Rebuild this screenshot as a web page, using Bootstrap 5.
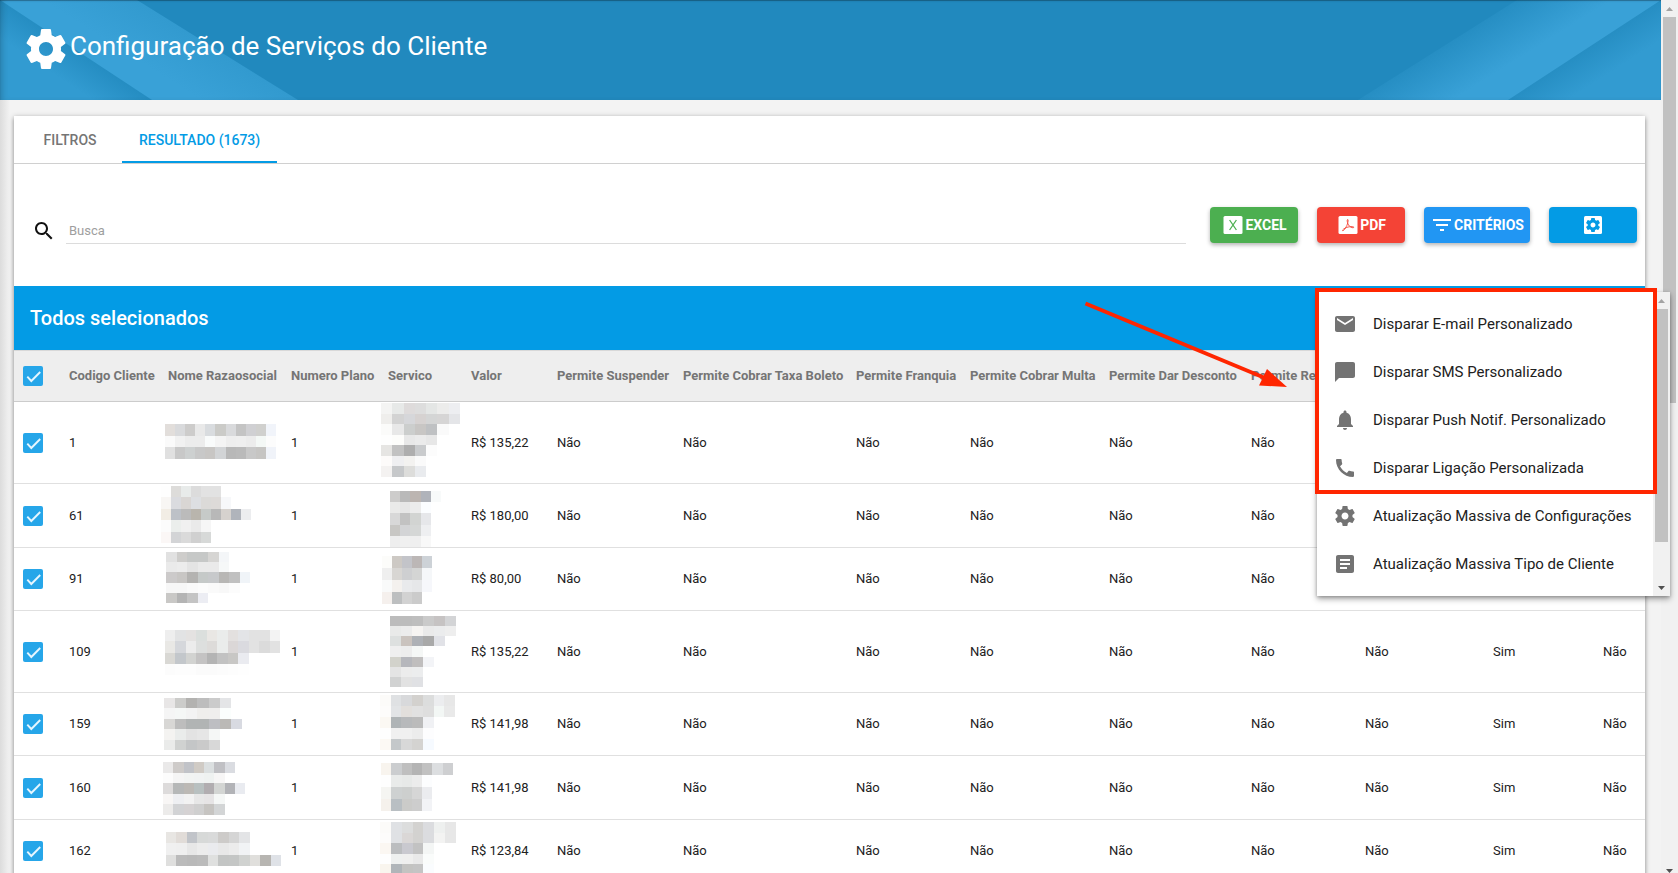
<!DOCTYPE html>
<html lang="pt-BR">
<head>
<meta charset="utf-8">
<meta name="viewport" content="width=device-width, initial-scale=1">
<title>Configuração de Serviços do Cliente</title>
<link rel="stylesheet" href="https://cdn.jsdelivr.net/npm/bootstrap@5.3.0/dist/css/bootstrap.min.css">
<style>
  body { font-family: Roboto, "Liberation Sans", sans-serif; font-size: 13px; color: #212121; background: #f3f3f3; }
  .app-shell { height: 100vh; }
  .app-main { min-width: 0; background: linear-gradient(90deg, #dcdcdc 0, #f3f3f3 10px); }

  .page-head { height: 100px; background: #2189be; padding-left: 22px; }
  .page-head .ribbon { top: 0; height: 100px; z-index: 0; }
  .page-head .ribbon-start { left: 0; width: 300px; }
  .page-head .ribbon-end { right: 0; width: 304px; }
  .page-head::after { content: ""; position: absolute; inset: 0; box-shadow: inset 0 1px 1px rgba(0,0,0,.3), inset 5px 0 6px -3px rgba(0,0,0,.2); }
  .page-title { font-size: 26px; line-height: 32px; font-weight: 400; color: #fff; z-index: 1; padding-bottom: 6px; }
  .head-stack { gap: 0; padding-bottom: 2px; }
  .head-icon { width: 48px; height: 48px; color: #fff; z-index: 1; }

  .panel-wrap { padding: 16px 16px 0 14px; }
  .panel { background: #fff; box-shadow: 0 1px 5px rgba(0,0,0,.3), 0 3px 4px rgba(0,0,0,.2); }
  .tab-strip { height: 48px; border-bottom: 1px solid #d0d0d0; padding-left: 4px; flex-wrap: nowrap; }
  .tab-strip .nav-link { height: 47px; min-width: 104px; padding: 0 17px; border: 0; border-bottom: 2px solid transparent; border-radius: 0; font-size: 14px; line-height: 48px; font-weight: 500; color: #757575; text-align: center; }
  .tab-strip .nav-link.active { color: #039be5; border-bottom-color: #039be5; background: none; }

  .tool-row { height: 122px; padding: 0 8px 0 14px; gap: 19px; }
  .search-box { gap: 7px; margin-right: 5px; padding-top: 12px; }
  .search-box svg { width: 24px; height: 24px; margin: 0 3px 0 4px; fill: #111; flex: none; }
  .search-input { border: 0; border-bottom: 1px solid #dcdcdc; border-radius: 0; height: 26px; padding: 0 3px 0 3px; font-size: 13px; background: none; }
  .search-input::placeholder { color: #9e9e9e; opacity: 1; }
  .tool-btn { height: 36px; min-width: 88px; padding: 0 6px; border: 0; border-radius: 4px; color: #fff; font-size: 14px; line-height: 36px; font-weight: 700; box-shadow: 0 2px 4px rgba(0,0,0,.3); }
  .tool-btn svg { width: 24px; height: 24px; flex: none; }
  .tool-btn:hover { color: #fff; }
  .btn-excel, .btn-excel:hover { background: #4caf50; }
  .btn-pdf, .btn-pdf:hover { background: #f44336; }
  .btn-crit, .btn-crit:hover { background: #2196f3; }
  .btn-gear, .btn-gear:hover { background: #039be5; }

  .select-bar { height: 64px; padding-left: 16px; background: #039be5; color: #fff; font-size: 20px; line-height: 24px; font-weight: 500; }

  .grid-table { table-layout: fixed; width: 100%; border-collapse: separate; border-spacing: 0; white-space: nowrap; line-height: 18px; }
  .grid-table th, .grid-table td { padding: 0 0 0 20px; vertical-align: middle; border-bottom: 1px solid #e0e0e0; }
  .grid-table th { height: 52px; background: #eee; color: #757575; font-weight: 700; font-size: 13px; border-top: 1px solid #d8d8d8; border-bottom-color: #ccc; }
  .grid-table td.mosaic-cell { padding: 0; }
  .grid-table th:first-child, .grid-table td:first-child { padding-left: 9px; }
  .grid-table tbody tr:nth-child(even) { height: 64px; }
  .grid-table tbody tr:nth-child(odd) { height: 63px; }
  .grid-table tbody tr.row-tall { height: 82px; }
  .mosaic { display: block; width: 100%; height: 62px; overflow: visible; }
  .row-tall .mosaic { height: 81px; }
  .col-check { width: 35px; } .col-code { width: 99px; } .col-name { width: 123px; } .col-plan { width: 97px; }
  .col-service { width: 83px; } .col-value { width: 86px; } .col-suspend { width: 126px; } .col-slip { width: 173px; }
  .col-quota { width: 114px; } .col-fine { width: 139px; } .col-discount { width: 142px; } .col-adjust { width: 114px; }
  .col-extra { width: 128px; } .col-extra-b { width: 110px; }

  .tick { display: block; width: 20px; height: 20px; margin: 0; border-radius: 2px; appearance: none;
    background: #26a6e9 url("data:image/svg+xml,%3Csvg xmlns='http://www.w3.org/2000/svg' viewBox='0 0 20 20'%3E%3Cpath d='M4.3 10.6l4 4.4 8.9-9' fill='none' stroke='%23e6f6ff' stroke-width='1.9'/%3E%3C/svg%3E") center / 20px 20px; }

  .action-menu { top: 85px; right: -33px; width: 353px; padding: 8px 17px 8px 0; background: #fff; z-index: 20; box-shadow: 0 3px 6px rgba(0,0,0,.35), 0 1px 3px rgba(0,0,0,.2); }
  .menu-entry { height: 48px; padding: 0 16px; gap: 16px; font-size: 15px; line-height: 24px; color: #212121; background: none; border: 0; white-space: nowrap; }
  .menu-entry svg { width: 24px; height: 24px; fill: #737373; flex: none; }
  .menu-mark { left: -2px; top: -4px; width: 342px; height: 206px; border: 4px solid #ff2600; pointer-events: none; z-index: 2; }
  .menu-arrow { left: -234px; top: 9px; width: 206px; height: 90px; pointer-events: none; }

  .bar-track { width: 17px; background: #f1f1f1; padding: 0 2px; }
  .bar-thumb { background: #c1c1c1; }
  .bar-cap { height: 17px; flex: none; display: flex; align-items: center; justify-content: center; }
  .bar-cap svg { width: 7px; height: 4px; }
  .menu-bar { top: 0; right: 0; bottom: 0; }
  .menu-bar .bar-thumb { height: 233px; }
  .page-bar .bar-thumb { height: 386px; }
  .page-bar .bar-end { height: 4px; align-items: flex-start; }
</style>
</head>
<body class="overflow-hidden">
<svg width="0" height="0" class="position-absolute" aria-hidden="true">
  <symbol id="gear" viewBox="0 0 24 24"><path d="M19.43 12.98c.04-.32.07-.64.07-.98s-.03-.66-.07-.98l2.11-1.65c.19-.15.24-.42.12-.64l-2-3.46c-.12-.22-.39-.3-.61-.22l-2.49 1c-.52-.4-1.08-.73-1.69-.98l-.38-2.65C14.46 2.18 14.25 2 14 2h-4c-.25 0-.46.18-.49.42l-.38 2.65c-.61.25-1.17.59-1.69.98l-2.49-1c-.23-.09-.49 0-.61.22l-2 3.46c-.13.22-.07.49.12.64l2.11 1.65c-.04.32-.07.65-.07.98s.03.66.07.98l-2.11 1.65c-.19.15-.24.42-.12.64l2 3.46c.12.22.39.3.61.22l2.49-1c.52.4 1.08.73 1.69.98l.38 2.65c.03.24.24.42.49.42h4c.25 0 .46-.18.49-.42l.38-2.65c.61-.25 1.17-.59 1.69-.98l2.49 1c.23.09.49 0 .61-.22l2-3.46c.12-.22.07-.49-.12-.64l-2.11-1.65zM12 15.5c-1.93 0-3.5-1.57-3.5-3.5s1.57-3.5 3.5-3.5 3.5 1.57 3.5 3.5-1.57 3.5-3.5 3.5z"/></symbol>
</svg>

<div class="app-shell d-flex overflow-hidden position-relative">
  <main class="app-main flex-grow-1">
    <header class="page-head d-flex align-items-center position-relative overflow-hidden">
      <svg class="ribbon ribbon-start position-absolute" viewBox="0 0 300 100" aria-hidden="true">
        <defs>
          <linearGradient id="ls" gradientUnits="userSpaceOnUse" x1="76" y1="50" x2="58" y2="77"><stop offset="0" stop-color="#258dc2"/><stop offset="1" stop-color="#329bd1"/></linearGradient>
          <linearGradient id="lb" gradientUnits="userSpaceOnUse" x1="217" y1="50" x2="190" y2="93"><stop offset="0" stop-color="#329acf"/><stop offset="1" stop-color="#39a1d7"/></linearGradient>
        </defs>
        <path d="M0 0H137L298 100H0z" fill="url(#lb)"/>
        <path d="M0 0L152 100H0z" fill="url(#ls)"/>
      </svg>
      <svg class="ribbon ribbon-end position-absolute" viewBox="0 0 304 100" aria-hidden="true">
        <defs>
          <linearGradient id="rb" gradientUnits="userSpaceOnUse" x1="80" y1="50" x2="107" y2="93"><stop offset="0" stop-color="#268ec3"/><stop offset="1" stop-color="#39a1d7"/></linearGradient>
          <linearGradient id="rs" gradientUnits="userSpaceOnUse" x1="227" y1="50" x2="245" y2="78"><stop offset="0" stop-color="#268ec3"/><stop offset="1" stop-color="#329bd1"/></linearGradient>
        </defs>
        <path d="M160 0H304V100H1z" fill="url(#rb)"/>
        <path d="M304 0V100H151z" fill="url(#rs)"/>
      </svg>
      <div class="head-stack d-flex align-items-center">
        <svg class="head-icon position-relative flex-shrink-0" fill="currentColor" aria-hidden="true"><use href="#gear"/></svg>
        <h1 class="page-title position-relative mb-0">Configuração de Serviços do Cliente</h1>
      </div>
    </header>

    <div class="panel-wrap">
      <section class="panel">
        <nav class="tab-strip nav">
          <a class="nav-link" href="#filtros">FILTROS</a>
          <a class="nav-link active" href="#resultado" aria-current="page">RESULTADO (1673)</a>
        </nav>

        <div class="tool-row d-flex align-items-center">
          <div class="search-box d-flex align-items-center flex-grow-1">
            <svg viewBox="0 0 24 24" aria-hidden="true"><path d="M15.5 14h-.79l-.28-.27C15.41 12.59 16 11.11 16 9.500 16 5.910 13.090 3 9.500 3S3 5.910 3 9.500 5.910 16 9.500 16c1.610 0 3.090-.59 4.230-1.570l.27.28v.79l5 4.990L20.490 19l-4.990-5zm-6 0C7.010 14 5 11.990 5 9.500S7.010 5 9.500 5 14 7.010 14 9.500 11.990 14 9.500 14z"/></svg>
            <input class="search-input form-control shadow-none" type="search" placeholder="Busca" aria-label="Busca">
          </div>
          <button class="tool-btn btn btn-excel d-flex align-items-center justify-content-center" type="button">
            <svg viewBox="0 0 24 24" aria-hidden="true"><rect x="2.500" y="3" width="19" height="18" rx="1.500" fill="#fff"/><path d="M8.600 7l6.800 10M15.400 7L8.600 17" stroke="#4caf50" stroke-width="1.300" fill="none"/></svg>EXCEL
          </button>
          <button class="tool-btn btn btn-pdf d-flex align-items-center justify-content-center" type="button">
            <svg viewBox="0 0 24 24" aria-hidden="true"><rect x="2.500" y="3" width="19" height="18" rx="1.500" fill="#fff"/><path d="M11.700 6.500c-1 0-.5 3.400.9 5.600 1.500 2.200 5 3.400 5.200 2.200.2-1-4.500-.8-7 .1-2.600 1-4.700 2.500-4.200 3.200.8.8 2.900-2.200 4.200-5 1.100-2.500 1.800-6.100.9-6.100z" stroke="#f44336" stroke-width=".9" fill="none"/></svg>PDF
          </button>
          <button class="tool-btn btn btn-crit d-flex align-items-center justify-content-center" type="button">
            <svg viewBox="0 0 24 24" aria-hidden="true"><path d="M3 6h18v2H3zM6 11h12v2H6zM10 16h4v2h-4z" fill="#fff"/></svg>CRITÉRIOS
          </button>
          <div class="position-relative">
            <button class="tool-btn btn btn-gear d-flex align-items-center justify-content-center" type="button" aria-label="Ações" aria-expanded="true">
              <svg viewBox="0 0 24 24" aria-hidden="true"><rect x="3" y="3" width="18" height="18" rx="1.500" fill="#fff"/><use href="#gear" x="3.500" y="3.500" width="17" height="17" fill="#039be5"/></svg>
            </button>
            <div class="action-menu position-absolute" role="menu">
              <button class="menu-entry d-flex align-items-center" type="button" role="menuitem"><svg viewBox="0 0 24 24" aria-hidden="true"><path d="M20 4H4c-1.100 0-1.990.9-1.990 2L2 18c0 1.100.9 2 2 2h16c1.100 0 2-.9 2-2V6c0-1.100-.9-2-2-2zm0 4l-8 5-8-5V6l8 5 8-5v2z"/></svg>Disparar E-mail Personalizado</button>
              <button class="menu-entry d-flex align-items-center" type="button" role="menuitem"><svg viewBox="0 0 24 24" aria-hidden="true"><path d="M20 2H4c-1.100 0-1.990.9-1.990 2L2 22l4-4h14c1.100 0 2-.9 2-2V4c0-1.100-.9-2-2-2z"/></svg>Disparar SMS Personalizado</button>
              <button class="menu-entry d-flex align-items-center" type="button" role="menuitem"><svg viewBox="0 0 24 24" aria-hidden="true"><path d="M12 22c1.100 0 2-.9 2-2h-4c0 1.100.89 2 2 2zm6-6v-5c0-3.070-1.640-5.640-4.500-6.320V4c0-.83-.67-1.500-1.500-1.500s-1.500.67-1.500 1.500v.68C7.630 5.360 6 7.920 6 11v5l-2 2v1h16v-1l-2-2z"/></svg>Disparar Push Notif. Personalizado</button>
              <button class="menu-entry d-flex align-items-center" type="button" role="menuitem"><svg viewBox="0 0 24 24" aria-hidden="true"><path d="M20.010 15.380c-1.230 0-2.420-.2-3.530-.56-.35-.12-.74-.03-1.010.24l-1.570 1.970c-2.830-1.350-5.480-3.900-6.890-6.830l1.950-1.660c.27-.28.35-.67.24-1.020-.37-1.110-.56-2.300-.56-3.530 0-.54-.45-.99-.99-.99H4.190C3.650 3 3 3.240 3 3.990 3 13.280 10.730 21 20.010 21c.71 0 .99-.63.99-1.180v-3.450c0-.54-.45-.99-.99-.99z"/></svg>Disparar Ligação Personalizada</button>
              <button class="menu-entry d-flex align-items-center" type="button" role="menuitem"><svg aria-hidden="true"><use href="#gear"/></svg>Atualização Massiva de Configurações</button>
              <button class="menu-entry d-flex align-items-center" type="button" role="menuitem"><svg viewBox="0 0 24 24" aria-hidden="true"><path d="M19 3H5c-1.100 0-2 .9-2 2v14c0 1.100.9 2 2 2h14c1.100 0 2-.9 2-2V5c0-1.100-.9-2-2-2zm-5 14H7v-2h7v2zm3-4H7v-2h10v2zm0-4H7V7h10v2z"/></svg>Atualização Massiva Tipo de Cliente</button>
              <div class="menu-bar bar-track position-absolute d-flex flex-column" aria-hidden="true">
                <div class="bar-cap"><svg viewBox="0 0 7 4"><path d="M0 4L3.500 0 7 4z" fill="#a3a3a3"/></svg></div>
                <div class="bar-thumb"></div>
                <div class="bar-cap mt-auto"><svg viewBox="0 0 7 4"><path d="M0 0L3.500 4 7 0z" fill="#505050"/></svg></div>
              </div>
              <div class="menu-mark position-absolute"></div>
              <svg class="menu-arrow position-absolute" viewBox="0 0 206 90" aria-hidden="true"><path d="M2.500 2.500L182 77" stroke="#ff2600" stroke-width="4" fill="none"/><path d="M204 86L184 68 176 84.500z" fill="#ff2600"/></svg>
            </div>
          </div>
        </div>

        <div class="select-bar d-flex align-items-center">Todos selecionados</div>

        <table class="grid-table">
          <colgroup>
            <col class="col-check"><col class="col-code"><col class="col-name"><col class="col-plan"><col class="col-service"><col class="col-value"><col class="col-suspend"><col class="col-slip"><col class="col-quota"><col class="col-fine"><col class="col-discount"><col class="col-adjust"><col class="col-extra"><col class="col-extra-b"><col>
          </colgroup>
          <thead>
            <tr>
              <th><input class="tick" type="checkbox" checked aria-label="Selecionar todos"></th>
              <th>Codigo Cliente</th><th>Nome Razaosocial</th><th>Numero Plano</th><th>Servico</th><th>Valor</th>
              <th>Permite Suspender</th><th>Permite Cobrar Taxa Boleto</th><th>Permite Franquia</th><th>Permite Cobrar Multa</th>
              <th>Permite Dar Desconto</th><th>Permite Reajuste</th><th></th><th></th><th></th>
            </tr>
          </thead>
          <tbody id="clients"></tbody>
        </table>
      </section>
    </div>
  </main>

  <div class="page-bar bar-track d-flex flex-column flex-shrink-0" aria-hidden="true">
    <div class="bar-cap"><svg viewBox="0 0 7 4"><path d="M0 4L3.500 0 7 4z" fill="#a3a3a3"/></svg></div>
    <div class="bar-thumb"></div>
    <div class="bar-cap bar-end mt-auto"><svg viewBox="0 0 7 4"><path d="M0 0L3.500 4 7 0z" fill="#505050"/></svg></div>
  </div>
</div>

<script src="https://cdn.jsdelivr.net/npm/bootstrap@5.3.0/dist/js/bootstrap.bundle.min.js"></script>
<script>
  // Private fields are shown as mosaics: [x, y, width, height, columns, rows of shades].
  const clients = [
    { code: "1", value: "R$ 135,22", tall: true, rest: ["", "", ""],
      name: [17, 22, 111, 35, 11, [
        "e2dedb d9dadc cdcccb e9 d9dcdf cbcbc8 d9dadc c4 d0d0d3 d0d0ce f1f4fa",
        "fa f1 ec ec f9fbfb f4 ee ef ec f4f8f6 fc",
        "e0 c8 cdd0d0 c8 c8c6c4 d2d4d6 b8 ba c8 c6c5c3 f0f3f9"]],
      service: [13, 1, 79, 74, 7, [
        "f4f4f3 e7e9e8 dedbdb dd e4e6e5 ececeb edeef1",
        "efeeec d3 d6d7da d6d2d1 d4d5d5 d6d5d5 e4e5e8",
        "fbfbfa e8 cccecd c8c6c4 bfc1c3 fa",
        "fe fdfdfb e8 eb e7",
        "e6e5e3 c2 ae c9cbcd fc",
        "fdfbfa efeff1 f3f2f0 fa",
        "f4f2f1 c6c8ca dddddb e9ebee"]] },
    { code: "61", value: "R$ 180,00", rest: ["", "", ""],
      name: [13, 1, 90, 57, 9, [
        "fe dddcda e8ebea dc e2 e2",
        "f8f6f4 dadbdf d9d6d4 dddfe2 dbdad8 dddad8 f7f8fa",
        "f2ede5 bdc1c7 bb b9b5ad c6cac8 b8 d6d2ce b0b4bb ecedef",
        "fc ebeeec f0 ea f6",
        "fbf7f6 d3d4d6 da d0 d7d9d8"]],
      service: [22, 6, 51, 56, 5, [
        "cdcccb b9 bcb5b1 b0b3ba f8fafa",
        "eaeae9 e6 ec fbfdff",
        "d8 c2 d2d4d2 e6e7ea",
        "c8c7c4 d3d4d6 d5d7d6 eeeff1",
        "ee f0 ef f8"]] },
    { code: "91", value: "R$ 80,00", rest: ["", "", ""],
      name: [18, 4, 84, 51, 8, [
        "e1 cecdcb c6c8c7 c6c8c7 d6d5d3 f4f6f8",
        "ea ec e4 ea ea f6f8f8",
        "cccaca c8c6c4 b4b3b1 c5c9c8 c7c9cb b8b7b5 c0 f0f4f8",
        "f7 f7 fa fc fa f8 fc",
        "c9c8c6 b4 c4 ecedf3"]],
      service: [14, 8, 50, 48, 5, [
        "fcfcfa cdc9c4 c3c4c9 bcb7b6 cdd2d7",
        "ef d8d6d3 cecfd1 d4d5d4 f5f7f9",
        "f9fafa f4f1ee e9eaec e6e7e9 f6f7fb",
        "f5f0ed bdbfc0 d2 cb"]] },
    { code: "109", value: "R$ 135,22", tall: true, rest: ["Não", "Sim", "Não"],
      name: [17, 19, 115, 45, 11, [
        "ee e2e3e4 e4e2e1 dbdfdd e9e7e4 eaeceb e3e0df e3e4e7 e2 e2 f3",
        "e9e8e5 d5d7db ec dddfde dddbd9 eaeceb dbd7d7 dadadf e2 db e2",
        "d9d8d4 c3c7cb d2d3d1 c4c3c3 b4 c2 c8c7c5 eaebf0",
        "fc fd fd fb fb fc fd fe"]],
      service: [22, 5, 66, 71, 6, [
        "bc bc be ca c6c3c3 d3d4d6",
        "e9eae9 ec f6f4f2 ea ebeced ee",
        "dde0df cac3be aeb1b6 a9 e1e2e7",
        "ef ed f5f7f6",
        "d2d2cb b6b7bc c0bebe f3f4f7",
        "e4 ec ecedee",
        "d1d2d2 e2 e0e1e4"]] },
    { code: "159", value: "R$ 141,98", rest: ["Não", "Sim", "Não"],
      name: [16, 5, 78, 52, 7, [
        "e8e6e6 ccccca b3b2b0 bd cb e4e5e7",
        "f5 f5f7f6 f3 efeeec efeeed fbfefd",
        "d8d7d5 bd b1b4b4 b1b4b4 bdbec2 bbb9b6 d8dae1",
        "f4f3f1 eaeceb e3 e6 f5f7f6",
        "eaebea d0d2d1 c4c6c7 ca d8"]],
      service: [12, 2, 75, 55, 7, [
        "fcfbf9 dfe1e3 d8d9db d3d1ce dcdddd ecedef e7",
        "fdfcfb e2e4e6 e2dfdc e1 de f3f7f5 e9",
        "fbf8f3 afb4b6 b7b9bb bb f0f1f4",
        "fe f0 f0 ec fdfdfe",
        "fcf9f4 c4c8ca d8 d4d3d1 f6faff"]] },
    { code: "160", value: "R$ 141,98", rest: ["Não", "Sim", "Não"],
      name: [15, 5, 82, 53, 8, [
        "eae9e9 cecbc9 c1c3c8 d0cbc5 dbdfe0 c0c0c4 dadce1",
        "fc f5 f2f4f3 f1f3f3 eff2f1 f7f6f6",
        "dddbdb b6b8b8 bcb9b5 b8c0c0 b1adb0 d3d5d3 b2b3b7 e9ebf0",
        "f8f6f5 eeeff2 f2 e7 e6e4e5 f5f7f6",
        "ecebea d2d3d5 d5d2d3 cf c6c4c1 d3d5d6"]],
      service: [13, 6, 72, 48, 7, [
        "f8f4ee cbcdcf bf b4 c1 dcdee0 cecfd1",
        "fe e9ebea e7e9e8 ec fcfdfe",
        "f5f5f2 ced1d1 cdcfce d6 ebecef",
        "f5f1ec b9bfc3 cbcbc9 cd f2f3f6"]] },
    { code: "162", value: "R$ 123,84", rest: ["Não", "Sim", "Não"],
      name: [18, 12, 115, 34, 11, [
        "e8e6e3 e1dcd8 c1c4c9 d7d9d8 d9dada cdcbc9 d5 e3e4e6",
        "f0 ef e7 ec eaebee e8 ec f1f3f5",
        "dfdfde bb b9 bb dfe0df c3c5c4 c4c6c5 d0d2d0 e0dfdc b7b5b1 dfe2e7"]],
      service: [12, 2, 76, 53, 7, [
        "fcfbf9 dfe1e4 dcdddd d3d2d0 dbdcdf eef0ef e7",
        "fdfcfb dfe1e4 dad7d6 d3d2d0 dbdcdf f3f3f2 e7",
        "fbf7f2 bbbdbf c9c9cf c2 f4f6f5",
        "fe eef0ef efefee e9 fafcfb",
        "f9f5ee b0b5b9 c3c3c1 c4 fafcfe"]] }
  ];

  function mosaic([x, y, w, h, cols, rows]) {
    const edge = (start, size, i, n) => start + Math.round(size * i / n);
    let out = "";
    rows.forEach((row, r) => {
      const top = edge(y, h, r, rows.length), bottom = edge(y, h, r + 1, rows.length);
      row.split(" ").forEach((shade, c) => {
        const left = edge(x, w, c, cols), right = edge(x, w, c + 1, cols);
        const fill = shade.length === 2 ? shade.repeat(3) : shade;
        out += `<rect x="${left}" y="${top}" width="${right - left}" height="${bottom - top}" fill="#${fill}"/>`;
      });
    });
    return `<svg class="mosaic" shape-rendering="crispEdges" aria-hidden="true">${out}</svg>`;
  }

  document.getElementById("clients").innerHTML = clients.map(c => `
    <tr class="${c.tall ? "row-tall" : ""}">
      <td><input class="tick" type="checkbox" checked aria-label="Selecionar cliente ${c.code}"></td>
      <td>${c.code}</td>
      <td class="mosaic-cell">${mosaic(c.name)}</td>
      <td>1</td>
      <td class="mosaic-cell">${mosaic(c.service)}</td>
      <td>${c.value}</td>
      ${"<td>Não</td>".repeat(6)}
      ${c.rest.map(v => `<td>${v}</td>`).join("")}
    </tr>`).join("");
</script>
</body>
</html>
